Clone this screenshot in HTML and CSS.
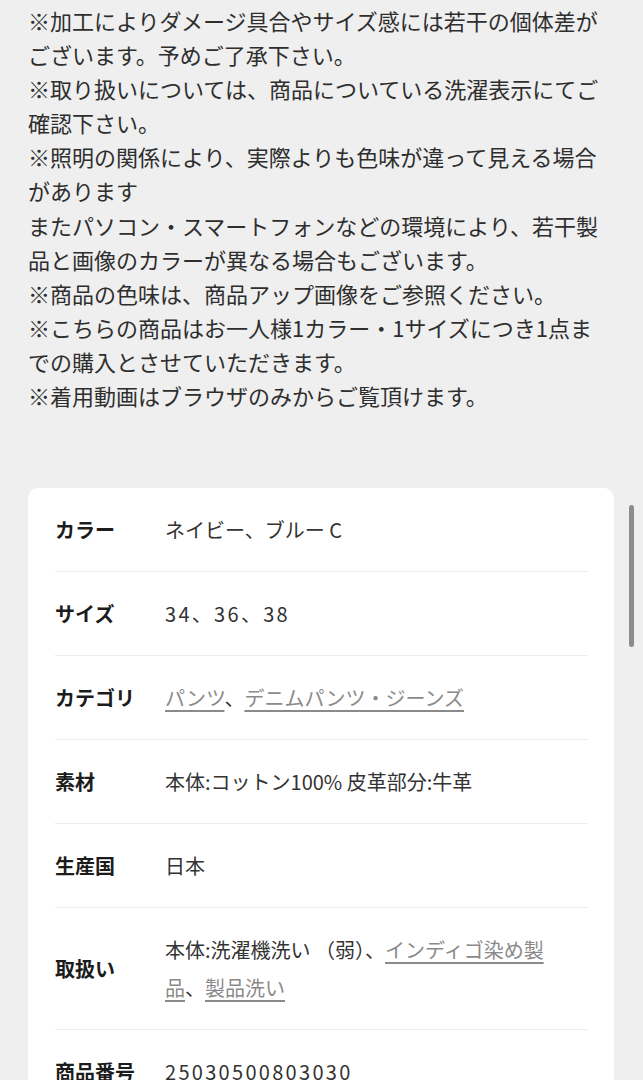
FILE: index.html
```html
<!DOCTYPE html>
<html lang="ja">
<head>
<meta charset="utf-8">
<link rel="stylesheet" href="styles.css">
</head>
<body>
<div class="page">
  <p class="notes">※加工によりダメージ具合やサイズ感には若干の個体差が<br>ございます。予めご了承下さい。<br>※取り扱いについては、商品についている洗濯表示にてご<br>確認下さい。<br>※照明の関係により、実際よりも色味が違って見える場合<br>があります<br>またパソコン・スマートフォンなどの環境により、若干製<br>品と画像のカラーが異なる場合もございます。<br>※商品の色味は、商品アップ画像をご参照ください。<br>※こちらの商品はお一人様1カラー・1サイズにつき1点ま<br>での購入とさせていただきます。<br>※着用動画はブラウザのみからご覧頂けます。</p>

  <div class="card">
    <div class="row"><div class="label">カラー</div><div class="value">ネイビー、ブルー C</div></div>
    <div class="row"><div class="label">サイズ</div><div class="value num">34、36、38</div></div>
    <div class="row"><div class="label">カテゴリ</div><div class="value"><a class="link">パンツ</a>、<a class="link">デニムパンツ・ジーンズ</a></div></div>
    <div class="row"><div class="label">素材</div><div class="value">本体:コットン100% 皮革部分:牛革</div></div>
    <div class="row"><div class="label">生産国</div><div class="value">日本</div></div>
    <div class="row"><div class="label">取扱い</div><div class="value wrap">本体:洗濯機洗い （弱）、<a class="link">インディゴ染め製品</a>、<a class="link">製品洗い</a></div></div>
    <div class="row"><div class="label">商品番号</div><div class="value num">25030500803030</div></div>
  </div>
</div>
<div class="scrollbar"></div>
</body>
</html>
```
FILE: styles.css
```css
html, body {
  margin: 0;
  padding: 0;
  background: #efefef;
}
body {
  font-family: "Noto Sans CJK JP", "Noto Sans", sans-serif;
  color: #2e2e2e;
  overflow: hidden;
}
.page {
  padding: 3px 28px 0 28px;
}
.notes {
  margin: 0;
  font-size: 22px;
  line-height: 34.1px;
  color: #2e2e2e;
  white-space: nowrap;
}
.card {
  margin-top: 76px;
  width: 586px;
  background: #fff;
  border-radius: 10px;
  padding: 0 26px 0 27px;
  box-sizing: border-box;
}
.row {
  display: flex;
  align-items: center;
  padding: 22.5px 0;
  border-bottom: 1px solid #ececec;
  font-size: 20px;
  line-height: 38px;
}
.label {
  flex: 0 0 110px;
  font-weight: 700;
  color: #1c1c1c;
}
.value {
  flex: 1;
  color: #333;
}
.wrap {
  max-width: 400px;
}
.num {
  letter-spacing: 2.3px;
}
.link {
  color: #8a8a8a;
  text-decoration: underline;
  text-decoration-color: #8a8a8a;
  text-underline-offset: 4px;
}
.scrollbar {
  position: fixed;
  left: 629px;
  top: 505px;
  width: 5px;
  height: 142px;
  border-radius: 3px;
  background: #8c8c8c;
}
```
